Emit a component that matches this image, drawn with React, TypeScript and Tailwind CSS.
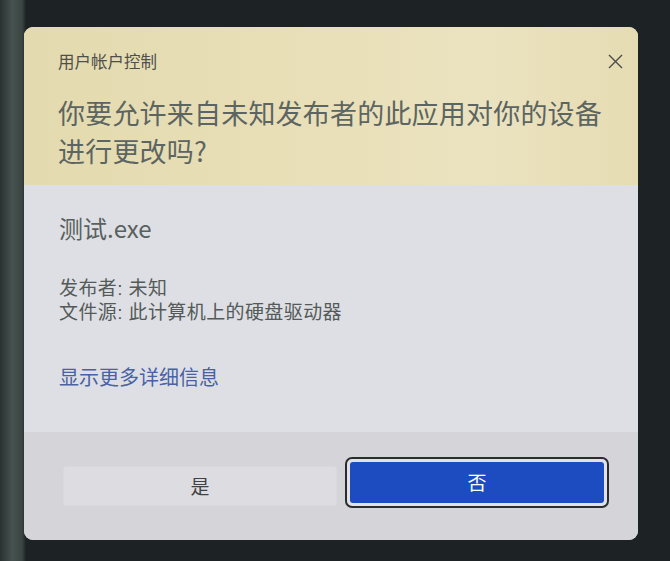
import React from "react";

const font = { fontFamily: '"Noto Sans CJK SC", "Noto Sans", sans-serif' };
const compact = { fontFamily: '"Liberation Sans", "Noto Sans CJK SC", sans-serif' };

export default function App() {
  return (
    <div
      className="w-[670px] h-[561px] overflow-hidden bg-[linear-gradient(90deg,#2a3231_0px,#46524f_12px,#3b4643_22px,#1d2224_26px,#1d2224_100%)] pl-[24px] pt-[27px]"
      style={font}
    >
      <div className="w-[614px] h-[513px] rounded-[9px] overflow-hidden flex flex-col bg-[#dedfe4]">
        {/* Header */}
        <div className="h-[158px] shrink-0 bg-[linear-gradient(90deg,#e4daaf_0%,#e9e0b9_50%,#ebe3c0_75%,#e6dcb3_100%)] pl-[34px] pr-[16px] pt-[23px]">
          <div className="flex items-center justify-between h-[22px]">
            <span className="text-[16.5px] leading-[22px] text-[#4e4f4b]">用户帐户控制</span>
            <svg width="15" height="15" viewBox="0 0 15 15" className="mr-[-1px]">
              <path d="M1 1 L14 14 M14 1 L1 14" stroke="#4a4c4a" strokeWidth="1.4" fill="none" />
            </svg>
          </div>
          <div className="mt-[22px] text-[27px] leading-[38px] text-[#5c6561] tracking-[0.2px]">
            你要允许来自未知发布者的此应用对你的设备
            <br />
            进行更改吗?
          </div>
        </div>

        {/* Body */}
        <div className="h-[247px] shrink-0 pl-[35px] pt-[28px]">
          <div className="text-[24px] leading-[30px] text-[#58615e]">测试.exe</div>
          <div
            className="mt-[34px] text-[19px] leading-[24px] tracking-[0.4px] text-[#535a58] flex flex-col"
            style={compact}
          >
            <span className="block h-[24px]">发布者: 未知</span>
            <span className="block h-[24px]">文件源: 此计算机上的硬盘驱动器</span>
          </div>
          <div className="mt-[40px] text-[20px] leading-[24px] text-[#4862a3]">显示更多详细信息</div>
        </div>

        {/* Footer */}
        <div className="flex-1 bg-[#d4d4d9] pl-[39px] pt-[25px] flex items-start gap-[8px]">
          <div className="mt-[9px] w-[274px] h-[40px] rounded-[3px] bg-[#dcdce1] border border-[#d8d8dd] flex items-center justify-center text-[19px] text-[#3f4243]">
            是
          </div>
          <div className="w-[264px] h-[51px] rounded-[7px] border-[2.5px] border-[#2a2d30] bg-[#e2e2e4] p-[3px]">
            <div className="w-full h-full rounded-[3px] bg-[#1d4cc0] flex items-center justify-center text-[19px] text-white">
              否
            </div>
          </div>
        </div>
      </div>
    </div>
  );
}
